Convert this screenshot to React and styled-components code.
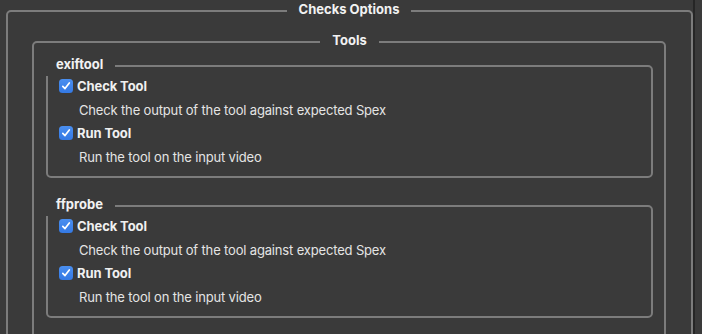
import React from "react";
import styled, { createGlobalStyle } from "styled-components";

const GlobalStyle = createGlobalStyle`
  html, body {
    margin: 0;
    padding: 0;
    background: #3a3a3a;
    overflow: hidden;
  }
  body {
    font-family: Inter, "Liberation Sans", sans-serif;
    font-size: 13px;
    color: #e6e6e6;
    -webkit-font-smoothing: antialiased;
  }
`;

const tools = [
  { name: "exiftool" },
  { name: "ffprobe" },
];

const options = [
  { label: "Check Tool", help: "Check the output of the tool against expected Spex" },
  { label: "Run Tool", help: "Run the tool on the input video" },
];

export default function App() {
  return (
    <>
      <GlobalStyle />
      <Page>
        <Outer>
          <CenterLegend>Checks Options</CenterLegend>
          <ToolsBox>
            <CenterLegend>Tools</CenterLegend>
            {tools.map((t) => (
              <Group key={t.name}>
                <GroupLegend>{t.name}</GroupLegend>
                {options.map((o) => (
                  <React.Fragment key={o.label}>
                    <CheckRow>
                      <Box>
                        <svg width="10" height="10" viewBox="0 0 10 10">
                          <path
                            d="M1.8 5.3 L4 7.6 L8.3 1.9"
                            fill="none"
                            stroke="#fff"
                            strokeWidth="1.7"
                            strokeLinecap="round"
                            strokeLinejoin="round"
                          />
                        </svg>
                      </Box>
                      <Label>{o.label}</Label>
                    </CheckRow>
                    <Help>{o.help}</Help>
                  </React.Fragment>
                ))}
              </Group>
            ))}
          </ToolsBox>
        </Outer>
      </Page>
    </>
  );
}

const Page = styled.div`
  width: 695px;
  height: 334px;
  box-sizing: border-box;
  padding-top: 1px;
  border-right: 2px solid #262626;
  overflow: hidden;
`;

const Fieldset = styled.fieldset`
  margin: 0;
  min-width: 0;
  border: 2px solid #7c7c7c;
  border-radius: 5px;
  box-sizing: border-box;
`;

const Outer = styled(Fieldset)`
  margin-left: 6px;
  width: 687px;
  height: 400px;
  padding: 11px 25px 0 24px;
`;

const ToolsBox = styled(Fieldset)`
  height: 380px;
  padding: 4px 11px 0 12px;
`;

const CenterLegend = styled.legend`
  margin: 0 auto;
  padding: 0 12px 4px;
  font-weight: 700;
  line-height: 16px;
  color: #f2f2f2;
`;

const Group = styled(Fieldset)`
  display: flex;
  flex-direction: column;
  gap: 3.5px;
  padding: 0 11px 9.5px;
  margin-bottom: 18px;
`;

const GroupLegend = styled.legend`
  margin-left: -14px;
  padding: 0 12px 4px 11px;
  font-weight: 700;
  line-height: 16px;
  color: #f2f2f2;
  background: linear-gradient(#3a3a3a 80%, transparent 80%);
`;

const CheckRow = styled.div`
  display: flex;
  align-items: center;
  height: 20px;
  gap: 4px;
`;

const Box = styled.span`
  width: 14px;
  height: 14px;
  border-radius: 3.5px;
  background: linear-gradient(#4a8ff0, #3479e4);
  display: flex;
  align-items: center;
  justify-content: center;
  flex-shrink: 0;
`;

const Label = styled.span`
  font-weight: 700;
  letter-spacing: -0.1px;
  color: #f0f0f0;
`;

const Help = styled.div`
  height: 20px;
  line-height: 20px;
  padding-left: 20px;
  letter-spacing: -0.16px;
  color: #e4e4e4;
`;
